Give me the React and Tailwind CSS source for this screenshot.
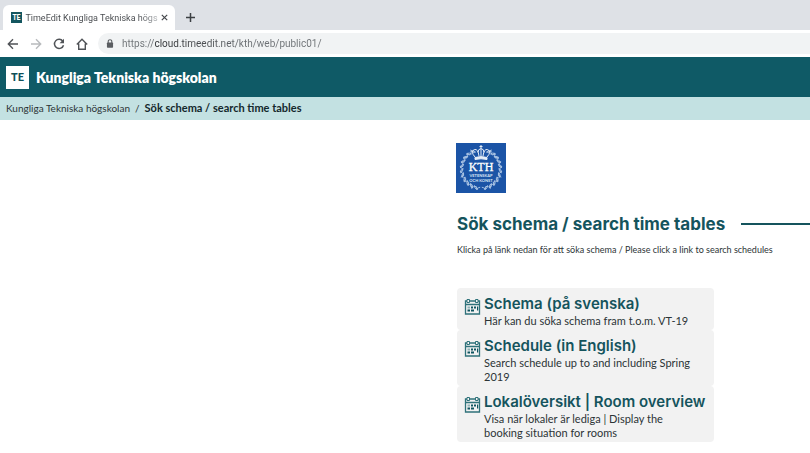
import { useState } from 'react';

const links = [
  {
    title: 'Schema (på svenska)',
    text: 'Här kan du söka schema fram t.o.m. VT-19',
  },
  {
    title: 'Schedule (in English)',
    text: 'Search schedule up to and including Spring 2019',
  },
  {
    title: 'Lokalöversikt | Room overview',
    text: 'Visa när lokaler är lediga | Display the booking situation for rooms',
  },
];

// left and right halves of the laurel wreath, as angles in degrees
const leaves = [28, 42, 56, 70, 84, 98, 112, 126, 140, 154, 168];

const CalendarIcon = () => (
  <svg viewBox="0 0 17 17" className="size-[17px] shrink-0" fill="none" stroke="#2f727a" aria-hidden="true">
    <path d="M1.500 3h14v13h-14zM1.500 6.500h14" strokeWidth="1.300" />
    <path d="M3 1.500h2.500v3H3zM11.500 1.500H14v3h-2.500z" fill="#f2f2f2" />
    <path d="M7 8.500h2v2H7zM10 8.500h2v2h-2zM3.500 11.500H6v2H3.500zM7 11.500h3v2H7zM13 8.500h1.200v4H13z" fill="#0f5560" stroke="none" />
    <path d="M3.500 8.500H6v2H3.500z" fill="#8fb3b7" stroke="none" />
  </svg>
);

const KthLogo = () => (
  <svg viewBox="0 0 50 50" className="size-[50px]" role="img" aria-label="KTH">
    <rect width="50" height="50" fill="#1b54a6" />
    {leaves.map(a => (
      <g key={a} fill="none" stroke="#a9c3e3" strokeWidth="0.900">
        <g transform={`rotate(${a} 25 26)`}>
          <path d="M25 5q-2.600 1.200-3 3.400q2.400-.4 3-3.400q1 2.600 3 3M24 8l2-3" />
        </g>
        <g transform={`rotate(${-a} 25 26)`}>
          <path d="M25 5q2.600 1.200 3 3.400q-2.400-.4-3-3.400q-1 2.600-3 3M26 8l-2-3" />
        </g>
      </g>
    ))}
    <g fill="none" stroke="#e6eef8" strokeWidth="1">
      <path d="M19 14.500q6-1.800 12 0v2q-6-1.500-12 0z" fill="#e6eef8" />
      <path d="M19 14q-5-5.500-.5-7.500q3.500-.8 4.500 6.500M31 14q5-5.500.5-7.500q-3.500-.8-4.500 6.500M25 13V5.500M25 5.500q-3 .5-3 4M25 5.500q3 .5 3 4" />
      <path d="M25 2v3M23.500 3.500h3" />
    </g>
    <text x="25" y="28" textAnchor="middle" fill="#fff" fontSize="12" fontWeight="400" fontFamily="'Liberation Serif', serif" stroke="#fff" strokeWidth="0.300">KTH</text>
    <text x="25" y="34" textAnchor="middle" fill="#dce7f5" fontSize="4" fontWeight="700" fontFamily="Lato, sans-serif">VETENSKAP</text>
    <text x="25" y="39" textAnchor="middle" fill="#dce7f5" fontSize="4" fontWeight="700" fontFamily="Lato, sans-serif">OCH KONST</text>
  </svg>
);

const BrowserBar = () => {
  const [url, setUrl] = useState('https://cloud.timeedit.net/kth/web/public01/');

  return (
    <div className="bg-[#dee1e6] font-['Roboto',sans-serif]">
      {/* Tabs */}
      <div className="flex h-[30px] items-end pl-[3px]">
        <div className="flex h-[25px] w-[172px] items-center justify-between rounded-t-md bg-white pr-[7px] pl-2">
          <span className="flex size-[11px] shrink-0 items-center justify-center bg-[#14565f] font-['Lato',sans-serif] text-[7px] font-black text-white">TE</span>
          <span className="bg-linear-to-r from-[#45484c] from-85% to-[#b4b7ba] bg-clip-text text-[9px] leading-4 whitespace-nowrap text-transparent">
            TimeEdit Kungliga Tekniska högs
          </span>
          <button type="button" aria-label="Close tab">
            <svg viewBox="0 0 7 7" className="size-[7px]" stroke="#45484c" strokeWidth="1.200">
              <path d="M.8.8l5.400 5.400M6.200.8L.8 6.200" />
            </svg>
          </button>
        </div>
        <button type="button" aria-label="New tab" className="mb-2 ml-[11px]">
          <svg viewBox="0 0 9 9" className="size-[9px]" stroke="#3c4043" strokeWidth="1.500">
            <path d="M4.500 0v9M0 4.500h9" />
          </svg>
        </button>
      </div>

      {/* Toolbar */}
      <div className="flex h-[27px] items-center bg-white pl-[7px]">
        <button type="button" aria-label="Back">
          <svg viewBox="0 0 12 12" className="size-3" fill="none" stroke="#505357" strokeWidth="1.400">
            <path d="M11 6H1.500M6 1.300L1.300 6L6 10.700" />
          </svg>
        </button>
        <button type="button" aria-label="Forward" className="ml-[11px]" disabled>
          <svg viewBox="0 0 12 12" className="size-3" fill="none" stroke="#b8babd" strokeWidth="1.400">
            <path d="M1 6h9.500M6 1.300L10.700 6L6 10.700" />
          </svg>
        </button>
        <button type="button" aria-label="Reload" className="ml-[11px]">
          <svg viewBox="0 0 12 12" className="size-3" fill="none" stroke="#505357" strokeWidth="1.500">
            <path d="M9.800 3.200A4.600 4.600 0 1 0 10.500 7.200" />
            <path d="M11 .8v4.400H6.600z" fill="#505357" stroke="none" />
          </svg>
        </button>
        <button type="button" aria-label="Home" className="ml-[11px]">
          <svg viewBox="0 0 12 12" className="size-3" fill="none" stroke="#505357" strokeWidth="1.400">
            <path d="M.8 6.500L6 1.300l5.200 5.200M2.700 5.500v5.700h6.600V5.500" />
          </svg>
        </button>
        <div className="ml-[10px] flex h-[21px] min-w-0 flex-1 items-center rounded-l-full bg-[#f1f3f4] pl-2">
          <svg viewBox="0 0 8 10" className="h-[9px] w-[8px] shrink-0" fill="none" aria-hidden="true">
            <path d="M2 4.500V2.800a2 2 0 0 1 4 0v1.700" stroke="#5a5d61" strokeWidth="1.200" />
            <rect x=".6" y="4" width="6.800" height="5.600" rx=".8" fill="#5a5d61" />
          </svg>
          <input
            type="text"
            aria-label="Address"
            value={url}
            onChange={e => setUrl(e.target.value)}
            className="ml-2 min-w-0 flex-1 bg-linear-to-r from-[#6d7175] from-[32px] via-[#2b2d30] via-[32px] to-[#6d7175] to-[130px] bg-clip-text text-[10px] leading-5 text-transparent outline-none"
          />
        </div>
      </div>
    </div>
  );
};

const App = () => (
  <div className="min-h-screen bg-white font-['Lato',sans-serif] text-[#2c3436]">
    <BrowserBar />

    <header className="flex h-10 items-center gap-[7px] bg-[#0f5a66] pl-[6px]">
      <span className="flex size-[23px] items-center justify-center bg-white text-[11px] font-black text-[#0f4f59]">TE</span>
      <span className="text-[14px] font-extrabold text-white">Kungliga Tekniska högskolan</span>
    </header>

    <nav aria-label="Breadcrumb" className="flex h-[23px] items-center bg-[#c3e1e2] pl-[6px]">
      <a href="#" className="text-[10px]">Kungliga Tekniska högskolan</a>
      <span className="mx-[5px] text-[10px]">/</span>
      <span className="text-[11px] font-bold text-[#14282c]">Sök schema / search time tables</span>
    </nav>

    <main className="pt-[23px] pl-[456px]">
      <KthLogo />

      <div className="pl-[1px]">
        <div className="mt-[19px] flex items-center gap-4">
          <h1 className="shrink-0 font-['Inter',sans-serif] text-[17px] leading-6 font-bold text-[#15545d]">Sök schema / search time tables</h1>
          <span className="h-[2px] flex-1 bg-[#15545d]" />
        </div>
        <p className="mt-[7px] text-[9px] leading-[14px] whitespace-nowrap">
          Klicka på länk nedan för att söka schema / Please click a link to search schedules
        </p>

        <ul className="mt-[31px] w-[257px]">
          {links.map(link => (
            <li key={link.title}>
              <a href="#" className="flex gap-[3px] rounded-sm bg-[#f2f2f2] pt-[6px] pr-3 pb-[2px] pl-[7px]">
                <span className="pt-1">
                  <CalendarIcon />
                </span>
                <span className="min-w-0">
                  <span className="block font-['Inter',sans-serif] text-[15px] leading-5 font-semibold whitespace-nowrap text-[#15545d]">{link.title}</span>
                  <span className="block text-[11px] leading-[14px]">{link.text}</span>
                </span>
              </a>
            </li>
          ))}
        </ul>
      </div>
    </main>
  </div>
);

export default App;
